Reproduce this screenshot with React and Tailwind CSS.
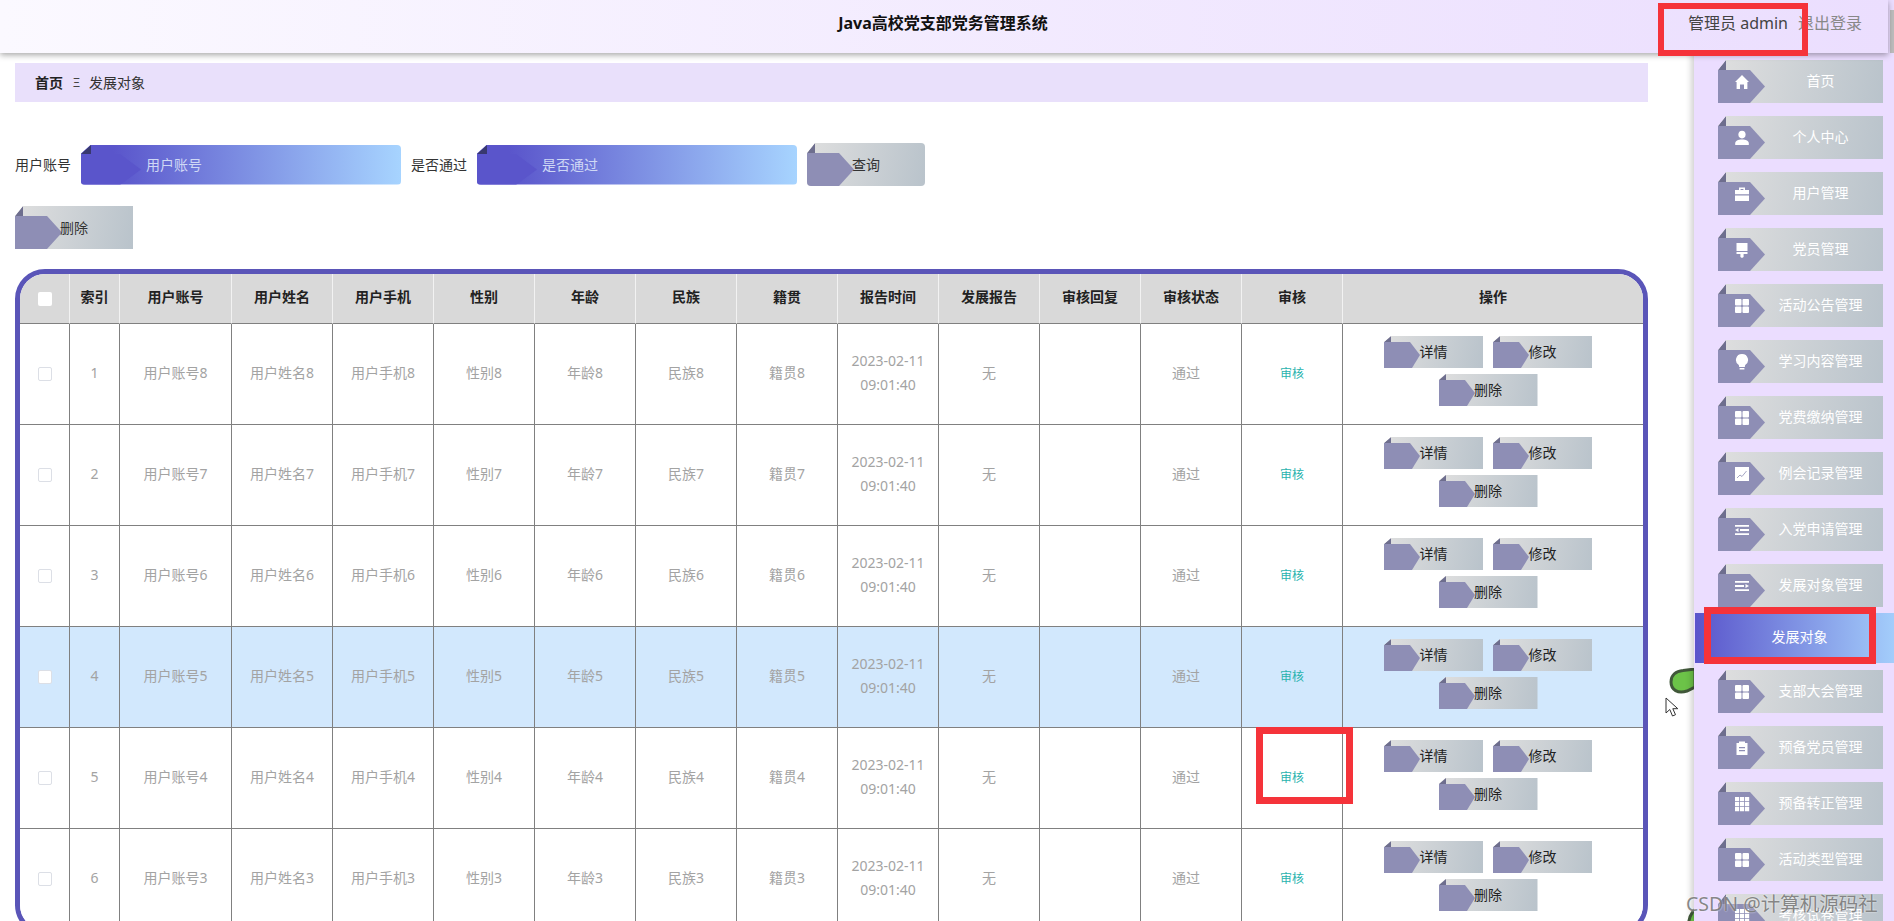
import React from "react";

const menu = [
  { name: "首页", icon: "home" },
  { name: "个人中心", icon: "user" },
  { name: "用户管理", icon: "case" },
  { name: "党员管理", icon: "brush" },
  { name: "活动公告管理", icon: "grid" },
  { name: "学习内容管理", icon: "bulb" },
  { name: "党费缴纳管理", icon: "grid" },
  { name: "例会记录管理", icon: "chart" },
  { name: "入党申请管理", icon: "fold" },
  { name: "发展对象管理", icon: "unfold" },
  { name: "发展对象", active: true },
  { name: "支部大会管理", icon: "grid" },
  { name: "预备党员管理", icon: "order" },
  { name: "预备转正管理", icon: "grid9" },
  { name: "活动类型管理", icon: "grid" },
  { name: "考核试卷管理", icon: "grid9" },
];

const headers = [
  "索引",
  "用户账号",
  "用户姓名",
  "用户手机",
  "性别",
  "年龄",
  "民族",
  "籍贯",
  "报告时间",
  "发展报告",
  "审核回复",
  "审核状态",
  "审核",
  "操作",
];

const rows = [
  { index: 1, n: 8 },
  { index: 2, n: 7 },
  { index: 3, n: 6 },
  { index: 4, n: 5 },
  { index: 5, n: 4 },
  { index: 6, n: 3 },
];

const NavIcon = ({ type }) => {
  return (
    <svg viewBox="0 0 16 16" className="absolute left-[16px] top-[14px] w-[16px] h-[16px]" fill="#fff">
      {type === "home" && <path d="M8 1l7 7h-1.6v7H10v-4.5H6V15H2.6V8H1z" />}
      {type === "user" && (
        <>
          <ellipse cx="8" cy="4.6" rx="3.6" ry="3.8" />
          <path d="M1.2 15v-1.6C1.2 10.800 4 9.400 8 9.400s6.800 1.400 6.800 4V15z" />
        </>
      )}
      {type === "case" && (
        <>
          <path d="M5 4V1.500h6V4h4v4.200H1V4zm1.600 0h2.800V3H6.600z" fillRule="evenodd" />
          <path d="M1 9.500h14V15H1z" />
        </>
      )}
      {type === "brush" && <path d="M2.500 1h11v8h-11zM2.500 10h11v2H9.600v3L8 16l-1.600-1v-3H2.500z" />}
      {type === "grid" && (
        <>
          <rect x="1" y="1" width="6.500" height="6.500" rx="1" />
          <rect x="8.500" y="1" width="6.500" height="6.500" rx="1" />
          <rect x="1" y="8.500" width="6.500" height="6.500" rx="1" />
          <rect x="8.500" y="8.500" width="6.500" height="6.500" rx="1" />
        </>
      )}
      {type === "bulb" && (
        <>
          <path d="M8 0a6 6 0 0 1 3.200 11.100L10.800 13H5.200l-.4-1.900A6 6 0 0 1 8 0z" />
          <rect x="5.500" y="14" width="5" height="1.500" rx=".6" />
        </>
      )}
      {type === "chart" && (
        <>
          <rect x="1" y="1" width="14" height="14" />
          <path d="M3 12l3-3 2 1.500L12.500 5" fill="none" stroke="#8e8eb5" strokeWidth=".8" />
        </>
      )}
      {type === "fold" && <path d="M1 3h14v1.800H1zM6 7.100h9v1.800H6zM1 11.200h14V13H1zM1 8l3.500-2v4z" />}
      {type === "unfold" && <path d="M1 3h14v1.800H1zM1 7.100h9v1.800H1zM1 11.200h14V13H1zM15 8l-3.500-2v4z" />}
      {type === "order" && (
        <path
          d="M5 1.500h6V3h2.500v12h-11V3H5zM5 7v1.300h6V7zm0 3v1.300h6V10z"
          fillRule="evenodd"
        />
      )}
      {type === "grid9" && (
        <path d="M1 1h4.200v4.200H1zM6 1h4.200v4.200H6zM11 1h4.200v4.200H11zM1 6h4.200v4.200H1zM6 6h4.200v4.200H6zM11 6h4.200v4.200H11zM1 11h4.200v4.200H1zM6 11h4.200v4.200H6zM11 11h4.200v4.200H11z" />
      )}
    </svg>
  );
};

// folded ribbon on the left of the grey buttons
const Ribbon = ({ w, h, fold, foldH, flat, flatBottom, tip, fill = "#8e8eb5", dark = "#6e6e8e" }) => {
  return (
    <svg width={w} height={h} className="absolute left-0 top-0 pointer-events-none">
      <polygon points={`0,${foldH} ${fold},0 ${fold},${foldH}`} fill={dark} />
      <polygon
        points={`0,${foldH} ${flat},${foldH} ${tip},${(foldH + h) / 2} ${flatBottom},${h} 0,${h}`}
        fill={fill}
      />
    </svg>
  );
};

const BigButton = ({ label, rounded }) => {
  return (
    <button
      className={`relative w-[118px] h-[43px] shrink-0 text-sm text-[#333] overflow-hidden bg-[linear-gradient(100deg,#dfdfdf,#b9c3cb)] [clip-path:polygon(8px_0,100%_0,100%_100%,0_100%,0_10px)] ${
        rounded ? "rounded-[4px]" : ""
      }`}
    >
      <Ribbon w={48} h={43} fold={8} foldH={10} flat={32} flatBottom={32} tip={47} />
      <span className="relative">{label}</span>
    </button>
  );
};

const RowButton = ({ label }) => {
  return (
    <button className="relative w-[99px] h-[32px] mr-[10px] text-sm text-[#222] bg-[linear-gradient(100deg,#dfdfdf,#b9c3cb)] [clip-path:polygon(7px_0,100%_0,100%_100%,0_100%,0_6px)]">
      <Ribbon w={37} h={32} fold={7} foldH={6} flat={26} flatBottom={28} tip={36} />
      <span className="relative">{label}</span>
    </button>
  );
};

const SearchInput = ({ placeholder }) => {
  return (
    <div className="relative w-[320px] h-10 shrink-0 rounded-[4px] overflow-hidden bg-[linear-gradient(90deg,#5a55cb,#5a55cb_10%,#a7d4ff)] [clip-path:polygon(10px_0,100%_0,100%_100%,0_100%,0_9px)]">
      <Ribbon w={61} h={40} fold={10} foldH={9} flat={39} flatBottom={39} tip={60} fill="#5a55cb" dark="#38386e" />
      <input
        placeholder={placeholder}
        className="relative w-full h-full pl-[65px] pr-3 bg-transparent text-sm outline-none placeholder:text-[#cfd8f5]"
      />
    </div>
  );
};

const Checkbox = ({ plain }) => {
  return (
    <input
      type="checkbox"
      readOnly
      className={`appearance-none align-middle w-[14px] h-[14px] bg-white rounded-[2px] ${plain ? "" : "border border-[#dcdfe6]"}`}
    />
  );
};

const Cell = ({ children }) => {
  return (
    <td className="h-[101px] pb-[2px] text-center text-sm text-[#a3a3a3] border-b border-r border-[#808080]">
      {children}
    </td>
  );
};

const App = () => {
  return (
    <div className="relative flex h-screen overflow-hidden bg-white text-[#333] [font-family:'Noto_Sans','Noto_Sans_CJK_SC',sans-serif]">
      <header className="absolute left-0 top-0 right-[6px] z-10 h-[53px] pb-[7px] flex items-center justify-center bg-[linear-gradient(90deg,#fbf9ff,#ebdefe)] shadow-[0_2px_6px_rgba(0,0,0,0.35)]">
        <h1 className="pr-[2px] text-base font-bold text-[#111]">Java高校党支部党务管理系统</h1>
        <div className="absolute left-[1688px] top-0 h-full pb-[7px] flex items-center text-base">
          <span className="text-[#444]">管理员 admin</span>
          <span className="ml-[10px] text-[#888]">退出登录</span>
        </div>
      </header>

      <main className="flex-1 min-w-0 px-[15px] pt-[63px] pr-[46px]">
        <div className="h-[39px] flex items-center pl-5 bg-[#e9e0fb] text-sm">
          <span className="font-bold text-[#222]">首页</span>
          <span className="ml-[9px] mr-[8px] w-[9px] text-center text-[#444] text-xs">Ξ</span>
          <span className="text-[#333]">发展对象</span>
        </div>

        <div className="flex items-center h-[43px] mt-[41px] text-sm">
          <label className="mr-[10px] shrink-0">用户账号</label>
          <SearchInput placeholder="用户账号" />
          <label className="mx-[10px] shrink-0">是否通过</label>
          <SearchInput placeholder="是否通过" />
          <div className="ml-[10px]">
            <BigButton label="查询" rounded />
          </div>
        </div>

        <div className="mt-5 h-[43px]">
          <BigButton label="删除" />
        </div>

        <div className="mt-5 border-[5px] border-[#5a55b8] rounded-[30px] overflow-hidden">
          <table className="w-[1623px] table-fixed border-separate border-spacing-0">
            <colgroup>
              <col className="w-[50px]" />
              <col className="w-[50px]" />
              <col className="w-[112px]" />
              {headers.slice(2, 13).map((h) => (
                <col key={h} className="w-[101px]" />
              ))}
              <col className="w-[300px]" />
            </colgroup>
            <thead>
              <tr className="bg-[#d9d9d9]">
                <th className="h-[50px] pb-[2px] border-r border-b border-r-[#f2f2f2] border-b-[#808080]">
                  <Checkbox plain />
                </th>
                {headers.map((h, i) => (
                  <th
                    key={h}
                    className={`h-[50px] pb-[3px] text-sm font-bold text-[#222] border-b border-b-[#808080] ${
                      i === headers.length - 1 ? "" : "border-r border-r-[#f2f2f2]"
                    }`}
                  >
                    {h}
                  </th>
                ))}
              </tr>
            </thead>
            <tbody>
              {rows.map((r) => (
                <tr key={r.index} className={r.index === 4 ? "bg-[#d2e8fd]" : "bg-white"}>
                  <Cell>
                    <Checkbox />
                  </Cell>
                  <Cell>{r.index}</Cell>
                  <Cell>用户账号{r.n}</Cell>
                  <Cell>用户姓名{r.n}</Cell>
                  <Cell>用户手机{r.n}</Cell>
                  <Cell>性别{r.n}</Cell>
                  <Cell>年龄{r.n}</Cell>
                  <Cell>民族{r.n}</Cell>
                  <Cell>籍贯{r.n}</Cell>
                  <Cell>
                    <div className="leading-6">
                      2023-02-11
                      <br />
                      09:01:40
                    </div>
                  </Cell>
                  <Cell>无</Cell>
                  <Cell></Cell>
                  <Cell>
                    <span className="mr-[10px]">通过</span>
                  </Cell>
                  <Cell>
                    <span className="text-xs text-[#2ab3ae]">审核</span>
                  </Cell>
                  <td className="h-[101px] pt-[12px] align-top border-b border-[#808080]">
                    <div className="flex flex-wrap justify-center gap-y-[6px]">
                      <RowButton label="详情" />
                      <RowButton label="修改" />
                      <RowButton label="删除" />
                    </div>
                  </td>
                </tr>
              ))}
            </tbody>
          </table>
        </div>
      </main>

      {/* stray decorations at the sidebar edge */}
      <svg width="26" height="26" viewBox="0 0 26 26" className="absolute left-[1669px] top-[668px]">
        <path
          d="M2 14C2 7 7 3 14 2.500L26 1v18l-8 4C9 26 2 22 2 14z"
          fill="#6cc348"
          stroke="#41583a"
          strokeWidth="3"
        />
      </svg>
      <svg width="26" height="26" viewBox="0 0 26 26" className="absolute left-[1686px] top-[906px]">
        <path d="M2 26C2 12 6 4 12 2l14-1v25z" fill="#6cc348" stroke="#41583a" strokeWidth="3" />
      </svg>
      <svg width="14" height="20" viewBox="0 0 14 20" className="absolute left-[1665px] top-[697px]">
        <path d="M1 1v15l3.800-3.500L7.500 19l3-1.300-2.700-6h5z" fill="#fff" stroke="#333" strokeWidth="1" />
      </svg>

      <aside className="relative w-[200px] shrink-0 pt-[60px] bg-[#ebddff] shadow-[-3px_0_6px_rgba(0,0,0,0.18)]">
        <div className="absolute right-0 top-[10px] w-[4px] h-[43px] bg-[#bdbdbd]" />
        <nav className="flex flex-col gap-[13px]">
          {menu.map((m) =>
            m.active ? (
              <div
                key={m.name}
                className="h-[50px] -mt-[7px] -mb-[6px] ml-px pl-[10px] pb-[2px] flex items-center justify-center text-sm text-white bg-[linear-gradient(90deg,#5a55cb,#a3cdfb)]"
              >
                {m.name}
              </div>
            ) : (
              <div
                key={m.name}
                className="relative ml-[24px] w-[165px] h-[43px] shrink-0 pl-[40px] pb-[2px] flex items-center justify-center text-sm text-white bg-[linear-gradient(100deg,#dfdfdf,#b9c3cb)] [clip-path:polygon(8px_0,100%_0,100%_100%,0_100%,0_10px)]"
              >
                <Ribbon w={48} h={43} fold={8} foldH={10} flat={32} flatBottom={32} tip={47} />
                <NavIcon type={m.icon} />
                <span className="relative">{m.name}</span>
              </div>
            )
          )}
        </nav>
      </aside>

      {/* red annotation boxes drawn on top of the screenshot */}
      <div className="absolute z-20 left-[1658px] top-[3px] w-[150px] h-[53px] border-[6px] border-[#f5333a]" />
      <div className="absolute z-20 left-[1704px] top-[607px] w-[172px] h-[57px] border-[7px] border-[#f5333a]" />
      <div className="absolute z-20 left-[1256px] top-[727px] w-[97px] h-[77px] border-[7px] border-[#f5333a]" />

      <div className="absolute z-30 left-[1686px] top-[889px] text-[19.5px] text-[#7d7d7d] opacity-90 [text-shadow:0_0_2px_#fff]">
        CSDN @计算机源码社
      </div>
    </div>
  );
};

export default App;
